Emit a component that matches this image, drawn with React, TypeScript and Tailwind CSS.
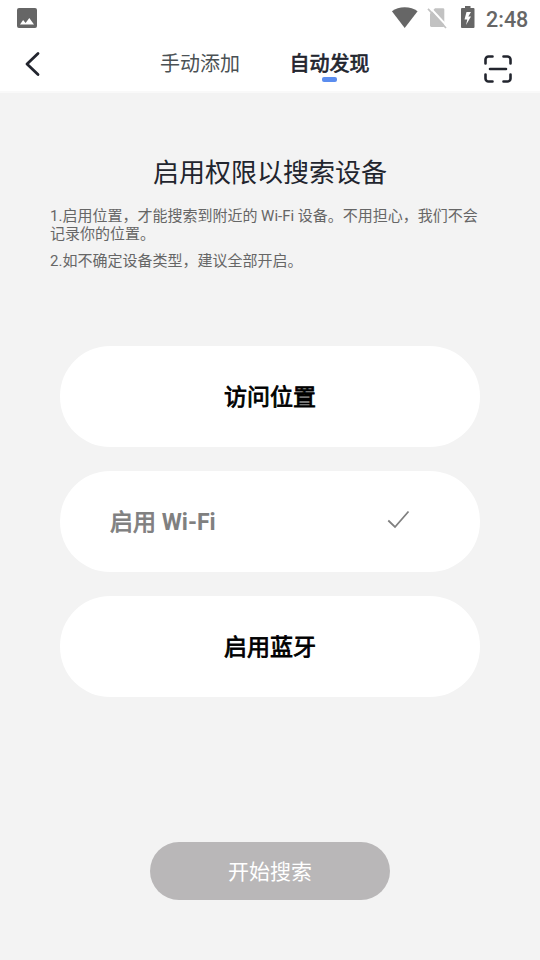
interface PermissionCardProps {
  label: string
  latin?: string
  enabled?: boolean
}

function StatusBar() {
  return (
    <div className="flex h-9 items-center justify-between pl-[17px] pr-3 text-[#666]">
      <svg width="20" height="20" viewBox="0 0 20 20" fill="currentColor">
        <path
          fillRule="evenodd"
          d="M2 0h16a2 2 0 0 1 2 2v16a2 2 0 0 1-2 2H2a2 2 0 0 1-2-2V2a2 2 0 0 1 2-2zM3 16.500h14L12.300 10l-3.700 5-2.500-3z"
        />
      </svg>
      <div className="flex items-center">
        <svg width="27" height="22" viewBox="0 0 27 22" fill="currentColor">
          <path d="M.9 4.200C4.300 1.600 8.800.3 13.700.3S23.200 1.600 26.600 4.200L13.700 21z" />
        </svg>
        <svg className="ml-[9px]" width="20" height="22" viewBox="0 0 20 22">
          <path d="M8 1.300h8a1.300 1.300 0 0 1 1.300 1.300v16a1.300 1.300 0 0 1-1.300 1.300H4.300a1.300 1.300 0 0 1-1.300-1.300V6.500z" fill="#c2c2c2" />
          <path d="M2.200-.3 20.700 19.700" stroke="#fff" strokeWidth="2" />
          <path d="M1 1.800 19 21" stroke="#c2c2c2" strokeWidth="1.700" />
        </svg>
        <svg className="-mt-0.5 ml-[13px]" width="16" height="22" viewBox="0 0 16 22" fill="currentColor">
          <path
            fillRule="evenodd"
            d="M5 0h5.500v2H13.500a1 1 0 0 1 1 1v18a1 1 0 0 1-1 1h-11.500a1 1 0 0 1-1-1V3a1 1 0 0 1 1-1H5zM6.500 6 4.500 13.500h2.800L6 19l5-8.500H8.300L11 6z"
          />
        </svg>
        <span className="ml-2.5 mt-[3px] w-[42px] whitespace-nowrap text-[21.500px] leading-6 font-medium">2:48</span>
      </div>
    </div>
  )
}

function Header() {
  return (
    <div className="flex h-[56px] items-start text-xl leading-[30px] text-[#22252e]">
      <svg className="ml-6 mt-[15px] shrink-0" width="17" height="26" viewBox="0 0 17 26" fill="none">
        <path d="M14 2.500 3 13l11 10.500" stroke="currentColor" strokeWidth="2.800" strokeLinecap="round" strokeLinejoin="round" />
      </svg>
      <div className="ml-[119px] mt-[13px] w-20 whitespace-nowrap text-[#4b5154]">手动添加</div>
      <div className="ml-[49px] mt-[13px] flex w-[81px] flex-col items-center whitespace-nowrap">
        <span className="[-webkit-text-stroke:0.7px_#22252e]">自动发现</span>
        <div className="-mt-0.5 h-[5px] w-[15px] rounded-[2px] bg-[#5b8def]" />
      </div>
      <svg className="ml-[114px] mt-[19px] shrink-0" width="28" height="28" viewBox="0 0 28 28" fill="none" stroke="currentColor" strokeWidth="2.600" strokeLinecap="round">
        <path d="M1.500 8.500V4.500a3 3 0 0 1 3-3h4M19.500 1.500h4a3 3 0 0 1 3 3v4M26.500 19.500v4a3 3 0 0 1-3 3h-4M8.500 26.500h-4a3 3 0 0 1-3-3v-4M6 14h16" />
      </svg>
    </div>
  )
}

function PermissionCard({ label, latin, enabled }: PermissionCardProps) {
  if (enabled) {
    return (
      <div className="flex h-[101px] items-center justify-between rounded-[50px] bg-white pl-[50px] pr-[70px] text-[23px] text-[#808080]">
        <span className="whitespace-pre pt-1">
          <span className="[-webkit-text-stroke:0.8px_#808080]">{label}</span>
          <span className="font-bold"> {latin}</span>
        </span>
        <svg className="-mt-1.5" width="23" height="20" viewBox="0 0 23 20" fill="none">
          <path d="M1.300 11.500 8 18 21.500 2.500" stroke="currentColor" strokeWidth="1.800" />
        </svg>
      </div>
    )
  }
  return (
    <div className="flex h-[101px] items-center justify-center rounded-[50px] bg-white text-[23px] text-black">
      <span className="pt-1 [-webkit-text-stroke:0.8px_#000]">{label}</span>
    </div>
  )
}

export default function App() {
  return (
    <div className="flex h-[960px] w-[540px] flex-col bg-[#f3f3f3] font-[Roboto,'Noto_Sans_CJK_SC',sans-serif]">
      <div className="h-[93px] shrink-0 border-b-2 border-[#f9f9f9] bg-white">
        <StatusBar />
        <Header />
      </div>
      <h1 className="mt-[61px] text-center text-[26px] leading-[38px] text-[#22252e]">启用权限以搜索设备</h1>
      <div className="ml-[50px] mt-[15px] w-[440px] text-[15px] leading-[18px] text-[#666]">
        <p>
          1.启用位置，才能搜索到附近的 Wi-Fi 设备。不用担心，我们不会
          <br />
          记录你的位置。
        </p>
        <p className="mt-[9px]">2.如不确定设备类型，建议全部开启。</p>
      </div>
      <div className="mx-[60px] mt-[76px] flex flex-col gap-6">
        <PermissionCard label="访问位置" />
        <PermissionCard label="启用" latin="Wi-Fi" enabled />
        <PermissionCard label="启用蓝牙" />
      </div>
      <button className="mx-auto mt-[145px] h-[58px] w-60 rounded-full bg-[#b9b7b8] pt-1 text-[21px] text-white">开始搜索</button>
    </div>
  )
}
